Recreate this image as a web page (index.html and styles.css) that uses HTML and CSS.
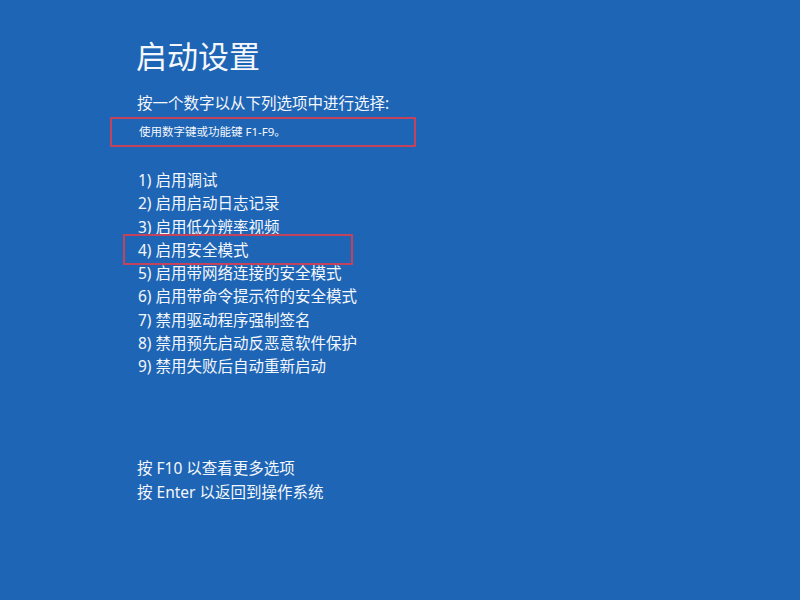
FILE: index.html
```html
<!DOCTYPE html>
<html lang="zh-CN">
<head>
<meta charset="utf-8">
<title>启动设置</title>
<link rel="stylesheet" href="styles.css">
</head>
<body>
<main class="screen">
  <h1 class="title">启动设置</h1>
  <p class="subtitle">按一个数字以从下列选项中进行选择:</p>
  <div class="hint-box">使用数字键或功能键 F1-F9。</div>
  <ol class="options">
    <li>1) 启用调试</li>
    <li>2) 启用启动日志记录</li>
    <li>3) 启用低分辨率视频</li>
    <li class="marked">4) 启用安全模式</li>
    <li>5) 启用带网络连接的安全模式</li>
    <li>6) 启用带命令提示符的安全模式</li>
    <li>7) 禁用驱动程序强制签名</li>
    <li>8) 禁用预先启动反恶意软件保护</li>
    <li>9) 禁用失败后自动重新启动</li>
  </ol>
  <div class="footer">
    <p>按 F10 以查看更多选项</p>
    <p>按 Enter 以返回到操作系统</p>
  </div>
</main>
</body>
</html>
```
FILE: styles.css
```css
html, body {
  margin: 0;
  padding: 0;
  width: 800px;
  height: 600px;
  overflow: hidden;
  background: #1e65b5;
}
.screen {
  box-sizing: border-box;
  width: 800px;
  height: 600px;
  padding: 36px 0 0 136px;
  color: #f4f7fb;
  font-family: "Segoe UI", "Noto Sans", "Noto Sans CJK SC", sans-serif;
}
.title {
  margin: 0;
  font-size: 31px;
  line-height: 40px;
  font-weight: 400;
}
.subtitle {
  margin: 15px 0 0 1px;
  font-size: 15.5px;
  line-height: 24px;
}
.hint-box {
  box-sizing: border-box;
  margin: 2px 0 0 -26px;
  width: 306px;
  height: 30px;
  border: 2px solid #c4435c;
  padding-left: 27px;
  font-size: 11.5px;
  line-height: 26px;
}
.options {
  list-style: none;
  margin: 22px 0 0 2px;
  padding: 0;
  font-size: 15.5px;
  line-height: 23.3px;
}
.options li {
  position: relative;
}
.options li.marked::after {
  content: "";
  position: absolute;
  left: -15px;
  top: -5px;
  width: 230px;
  height: 31px;
  box-sizing: border-box;
  border: 2px solid #c4435c;
}
.footer {
  margin: 77px 0 0 1px;
  font-size: 15.5px;
  line-height: 24px;
}
.footer p {
  margin: 0;
}
```
